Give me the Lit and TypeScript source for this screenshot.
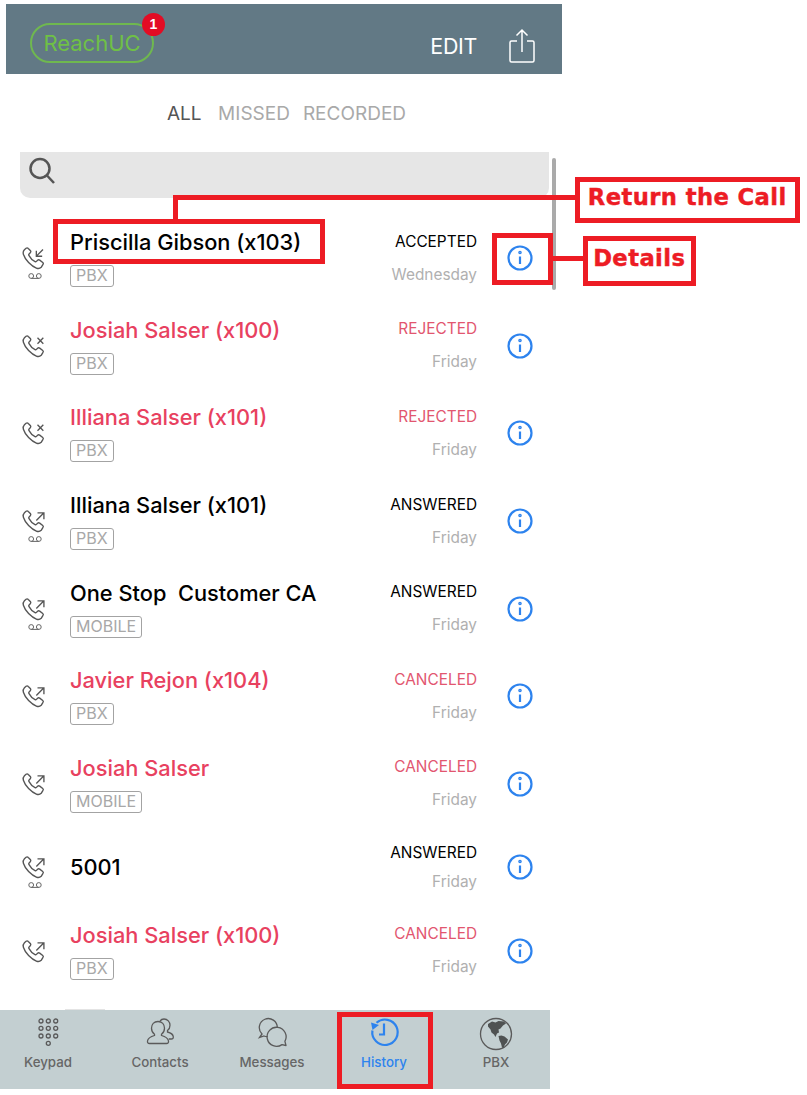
import { LitElement, html, css, svg } from "lit";
import { customElement } from "lit/decorators.js";

type Dir = "out" | "in" | "x";
interface Call {
  name: string;
  tag?: string;
  status: string;
  when: string;
  missed?: boolean;
  dir: Dir;
  vm?: boolean;
}

const calls: Call[] = [
  { name: "Priscilla Gibson (x103)", tag: "PBX", status: "ACCEPTED", when: "Wednesday", dir: "in", vm: true },
  { name: "Josiah Salser (x100)", tag: "PBX", status: "REJECTED", when: "Friday", missed: true, dir: "x" },
  { name: "Illiana Salser (x101)", tag: "PBX", status: "REJECTED", when: "Friday", missed: true, dir: "x" },
  { name: "Illiana Salser (x101)", tag: "PBX", status: "ANSWERED", when: "Friday", dir: "out", vm: true },
  { name: "One Stop  Customer CA", tag: "MOBILE", status: "ANSWERED", when: "Friday", dir: "out", vm: true },
  { name: "Javier Rejon (x104)", tag: "PBX", status: "CANCELED", when: "Friday", missed: true, dir: "out" },
  { name: "Josiah Salser", tag: "MOBILE", status: "CANCELED", when: "Friday", missed: true, dir: "out" },
  { name: "5001", status: "ANSWERED", when: "Friday", dir: "out", vm: true },
  { name: "Josiah Salser (x100)", tag: "PBX", status: "CANCELED", when: "Friday", missed: true, dir: "out" },
];

const handset = svg`<path d="M19.600 17.600c.5-.6.5-1.300-.1-1.800l-2.600-2c-.6-.4-1.300-.4-1.800.1l-1 1c-.3.3-.8.4-1.200.2-1.900-1-4.200-3.300-5.300-5.400-.2-.4-.1-.9.2-1.200l1-1c.5-.5.6-1.200.2-1.800L7.100 3.900c-.5-.6-1.300-.7-1.900-.2L3.800 5c-1 1-1.300 2.400-.9 3.800 1.400 4.600 6.700 10.300 11.500 12 1.400.4 2.800.1 3.800-.9z"/>`;

function callIcon(c: Call) {
  const mark =
    c.dir === "out"
      ? svg`<path d="M14 11.500 20.300 5.200M15 5h5.500v5.500"/>`
      : c.dir === "in"
      ? svg`<path d="M19.700 4.700 14 10.400M14 5.700v4.800h5"/>`
      : svg`<path d="M15 5l5 5M20 5l-5 5"/>`;
  return html`<div class="call-ic">
    <svg class="phone" viewBox="0 0 24 24">${handset}${mark}</svg>
    ${c.vm
      ? html`<svg class="vm" viewBox="0 0 14 6"><circle cx="3.200" cy="3" r="2.400"/><circle cx="10.800" cy="3" r="2.400"/><path d="M3.200 5.400h7.600"/></svg>`
      : ""}
  </div>`;
}

@customElement("app-root")
export class AppRoot extends LitElement {
  static styles = css`
    :host {
      display: block;
      position: relative;
      width: 807px;
      height: 1095px;
      overflow: hidden;
      background: #fff;
      font-family: Inter, "Liberation Sans", sans-serif;
    }
    .header {
      margin: 4px 0 0 6px;
      width: 556px;
      height: 70px;
      background: #627985;
      box-sizing: border-box;
      padding: 19px 26px 0 24px;
      display: flex;
      align-items: flex-start;
    }
    .brand {
      position: relative;
      width: 124px;
      height: 40px;
      box-sizing: border-box;
      border: 2px solid #6fb84f;
      border-radius: 20px;
      color: #6fc046;
      font-size: 22px;
      line-height: 37px;
      text-align: center;
    }
    .badge {
      position: absolute;
      right: -13px;
      top: -12px;
      width: 23px;
      height: 23px;
      border-radius: 50%;
      background: #e30c24;
      color: #fff;
      font: bold 14px/23px "Liberation Sans", sans-serif;
      text-align: center;
    }
    .edit {
      margin-left: auto;
      color: #fff;
      font-size: 21.400px;
      line-height: 47px;
      letter-spacing: -0.3px;
    }
    .share {
      width: 28px;
      height: 36px;
      margin: 5px 0 0 31px;
      fill: none;
      stroke: #fff;
      stroke-width: 1.500;
    }
    .filters {
      display: flex;
      gap: 13px;
      height: 78px;
      box-sizing: border-box;
      padding: 28px 0 0 167px;
      font-size: 19px;
      line-height: 24px;
      color: #a9a9a9;
    }
    .filters .on {
      color: #555;
      margin-right: 3.500px;
    }
    .search {
      margin-left: 20px;
      width: 529px;
      height: 46px;
      box-sizing: border-box;
      background: #e6e6e6;
      border-radius: 0 0 10px 10px;
      padding: 5px 0 0 8px;
    }
    .search svg {
      display: block;
      width: 28px;
      height: 28px;
      fill: none;
      stroke: #555;
      stroke-width: 2.500;
    }
    .list {
      margin-top: 16.500px;
      height: 795px;
    }
    .row {
      display: flex;
      align-items: center;
      height: 87.600px;
      padding-left: 20px;
      box-sizing: border-box;
      width: 550px;
    }
    .row.short {
      height: 79.500px;
    }
    .call-ic {
      position: relative;
      width: 50px;
      height: 28px;
      flex: none;
    }
    .phone {
      display: block;
      width: 28px;
      height: 28px;
      fill: none;
      stroke: #555;
      stroke-width: 1.150;
    }
    .vm {
      position: absolute;
      left: 8px;
      top: 29px;
      width: 14px;
      height: 6px;
      fill: none;
      stroke: #666;
      stroke-width: 1;
    }
    .main {
      flex: 1;
      min-width: 0;
    }
    .name {
      font-size: 21.800px;
      font-weight: 500;
      line-height: 27px;
      color: #000;
      white-space: pre;
    }
    .missed .name {
      color: #e8415f;
    }
    .tag {
      display: inline-block;
      margin-top: 9px;
      height: 22px;
      box-sizing: border-box;
      border: 1.500px solid #a3a3a3;
      border-radius: 3px;
      padding: 0 5px;
      font-size: 16px;
      line-height: 19px;
      color: #a8a8a8;
      vertical-align: top;
    }
    .side {
      text-align: right;
      width: 110px;
      flex: none;
    }
    .status {
      font-size: 15.400px;
      line-height: 20px;
      color: #000;
    }
    .missed .status {
      color: #e2566f;
    }
    .when {
      margin-top: 13px;
      font-size: 15.400px;
      line-height: 20px;
      color: #b0b0b0;
    }
    .short .when {
      margin-top: 9px;
    }
    .info {
      flex: none;
      width: 26px;
      height: 26px;
      margin: 0 17px 0 30px;
      fill: none;
      stroke: #2d83ee;
      stroke-width: 2.200;
    }
    .tabs {
      position: relative;
      width: 550px;
      height: 79px;
      background: #c3cfd1;
      display: flex;
    }
    .tabs::before {
      content: "";
      position: absolute;
      left: 65px;
      top: -1px;
      width: 40px;
      height: 1px;
      background: #e4e4e4;
    }
    .tab {
      flex: none;
      width: 112px;
      display: flex;
      flex-direction: column;
      align-items: center;
      font-size: 13.300px;
      font-weight: 500;
      color: #666;
      padding-top: 7.500px;
    }
    .tab:first-child {
      margin-left: -8px;
    }
    .tab svg {
      display: block;
      width: 34px;
      height: 34px;
      fill: none;
      stroke: #5a5a5a;
      stroke-width: 1.300;
    }
    .tab span {
      margin-top: 2px;
      line-height: 18px;
    }
    .tab.active {
      color: #2d83ee;
    }
    .tab.active svg {
      stroke: #2d83ee;
      stroke-width: 2.200;
    }
    .scrollbar {
      position: absolute;
      left: 552px;
      top: 158px;
      width: 3.500px;
      height: 132px;
      background: #aaa;
      border-radius: 2px;
    }
    .box {
      position: absolute;
      box-sizing: border-box;
      border: 5px solid #ed1c24;
    }
    .lbl {
      display: flex;
      align-items: center;
      justify-content: center;
      padding-bottom: 5px;
      background: #fff;
      color: #ed1c24;
      font: bold 22.700px "DejaVu Sans", sans-serif;
      letter-spacing: 0.4px;
      -webkit-text-stroke: 0.4px #ed1c24;
    }
    .ln {
      position: absolute;
      background: #ed1c24;
    }
  `;

  private tabIcon(k: string) {
    if (k === "Keypad") {
      const xs = [10, 17.3, 24.7];
      const ys = [4, 11.3, 19];
      return svg`${ys.flatMap((y) => xs.map((x) => svg`<circle cx=${x} cy=${y} r="2"/>`))}<circle cx="17.300" cy="26.300" r="2"/>`;
    }
    if (k === "Contacts") {
      return svg`<path d="M15 4.500c-4 0-6.500 3-6.500 6.800 0 2.600 1.200 4.700 3 6v1.200c-3.500 1-6.500 2.500-7 5.500-.2 1.500.5 2.500 2 2.500h17c1.500 0 2.200-1 2-2.500-.5-3-3.500-4.500-7-5.500v-1.200c1.800-1.300 3-3.400 3-6 0-3.800-2.500-6.800-6.500-6.800z"/><path d="M17 4c1-1.300 2.500-2 4-2 3.500 0 6 2.800 6 6.200 0 2.300-1 4.200-2.500 5.400v1.400c3 .8 5.500 2 5.800 4.800.1 1.500-.6 2.200-2 2.200h-2.500"/>`;
    }
    if (k === "Messages") {
      return svg`<path d="M22.300 10.700A9 9 0 1 0 7 17L4.500 20.500 9 19A9 9 0 0 0 12.700 19.700"/><path stroke-linejoin="round" d="M27 27.600A9.500 9.500 0 1 1 29.900 24.400L31 28.500z"/>`;
    }
    if (k === "History") {
      return svg`<path d="M9.500 5.800A12.700 12.700 0 1 1 5.400 13.500"/><path fill="#2d83ee" stroke="none" d="M4 5.500 12 8 5.500 13z"/><path d="M17 6.500v11h-5"/>`;
    }
    return svg`<circle cx="17" cy="17" r="15.500"/><path fill="#4f5252" stroke="none" d="M9 7l4-2.500 3.500 1 3-1.500 5.500.5 2 2-3 2-2.500 3-2 1 .5 3-2 1-1.500 3.500-1.500-2.500-2.500-2-1-3-2.500-3z"/><path fill="#4f5252" stroke="none" d="M19.500 19l3-.5 3 1 3.500 3-1 3-2 2-1.500 3.500-1.500-.5-1-4-1.500-3z"/>`;
  }

  render() {
    return html`
      <div class="header">
        <div class="brand">ReachUC<div class="badge">1</div></div>
        <div class="edit">EDIT</div>
        <svg class="share" viewBox="0 0 28 36">
          <path d="M9 13H3.500A1.500 1.500 0 0 0 2 14.500V32.500A1.500 1.500 0 0 0 3.500 34h21a1.500 1.500 0 0 0 1.500-1.500V14.500A1.500 1.500 0 0 0 24.500 13H19"/>
          <path d="M14 24V2M8.500 7.500 14 2l5.500 5.500"/>
        </svg>
      </div>
      <div class="filters">
        <span class="on">ALL</span><span>MISSED</span><span>RECORDED</span>
      </div>
      <div class="search">
        <svg viewBox="0 0 28 28"><circle cx="12" cy="11.500" r="9.500"/><path d="M19 18.500 26 26"/></svg>
      </div>
      <div class="list">
        ${calls.map(
          (c) => html`<div class="row ${c.missed ? "missed" : ""} ${c.tag ? "" : "short"}">
            ${callIcon(c)}
            <div class="main">
              <div class="name">${c.name}</div>
              ${c.tag ? html`<div class="tag">${c.tag}</div>` : ""}
            </div>
            <div class="side">
              <div class="status">${c.status}</div>
              <div class="when">${c.when}</div>
            </div>
            <svg class="info" viewBox="0 0 26 26">
              <circle cx="13" cy="13" r="11.500"/>
              <path d="M13 11.500v7.500"/><circle cx="13" cy="7.500" r="0.700"/>
            </svg>
          </div>`
        )}
      </div>
      <div class="tabs">
        ${["Keypad", "Contacts", "Messages", "History", "PBX"].map(
          (t) => html`<div class="tab ${t === "History" ? "active" : ""}">
            <svg viewBox="0 0 34 34">${this.tabIcon(t)}</svg>
            <span>${t}</span>
          </div>`
        )}
      </div>
      <div class="scrollbar"></div>
      <div class="ln" style="left:173px;top:195px;width:402px;height:5px"></div>
      <div class="ln" style="left:173px;top:195px;width:5px;height:25px"></div>
      <div class="ln" style="left:553px;top:256px;width:30px;height:4.500px"></div>
      <div class="box" style="left:53px;top:218.500px;width:272px;height:45px"></div>
      <div class="box" style="left:492px;top:233px;width:61px;height:52px"></div>
      <div class="box lbl" style="left:574.500px;top:176.500px;width:225.500px;height:46px">Return the Call</div>
      <div class="box lbl" style="left:582.500px;top:235.500px;width:113.500px;height:50.500px">Details</div>
      <div class="box" style="left:337px;top:1012px;width:96px;height:77px"></div>
    `;
  }
}
